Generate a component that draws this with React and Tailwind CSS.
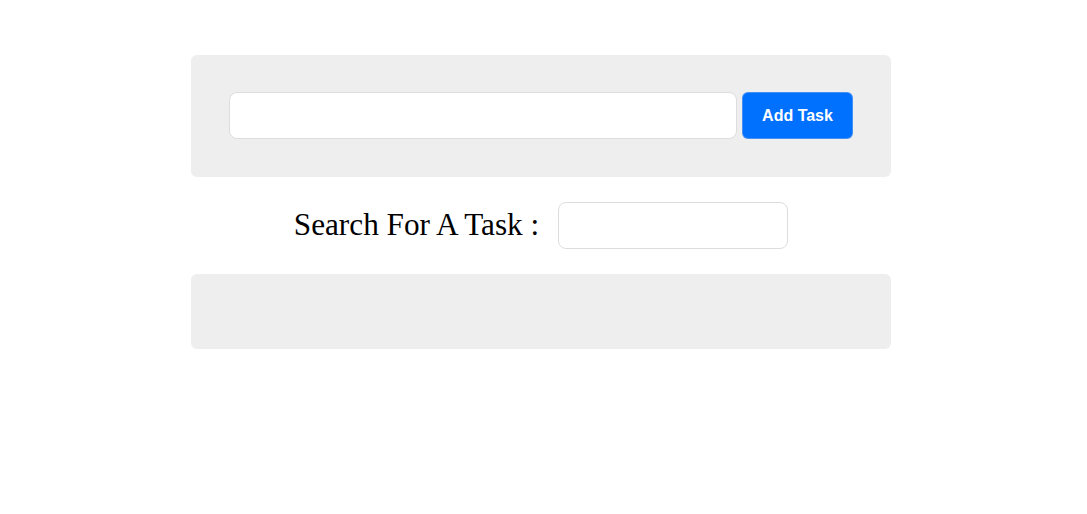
import React, { useState } from 'react';

export default function App() {
  const [task, setTask] = useState('');
  const [search, setSearch] = useState('');

  return (
    <div className="min-h-screen bg-white pt-[55px] pr-[5px] flex flex-col items-center">
      {/* add task card */}
      <div className="w-[700px] bg-[#eeeeee] rounded-md px-[38px] pt-[37px] pb-[38px] flex gap-[5px]">
        <input
          value={task}
          onChange={e => setTask(e.target.value)}
          className="w-[508px] h-[47px] bg-white border border-[#dddddd] rounded-lg px-3 outline-none"
        />
        <button className="w-[111px] h-[47px] bg-[#0070ff] text-white font-bold text-[16px] rounded-md border border-[#dddddd]/30 [font-family:'Liberation_Sans',Arial,sans-serif]">
          Add Task
        </button>
      </div>

      {/* search row */}
      <div className="flex items-center gap-[19px] mt-[25px]">
        <span className="text-[31.25px] text-black [font-family:'Liberation_Serif','Times_New_Roman',serif]">
          Search For A Task :
        </span>
        <input
          value={search}
          onChange={e => setSearch(e.target.value)}
          className="w-[230px] h-[47px] bg-white border border-[#dddddd] rounded-lg px-3 outline-none"
        />
      </div>

      {/* task list */}
      <div className="w-[700px] h-[75px] bg-[#eeeeee] rounded-md mt-[25px]"></div>
    </div>
  );
}
